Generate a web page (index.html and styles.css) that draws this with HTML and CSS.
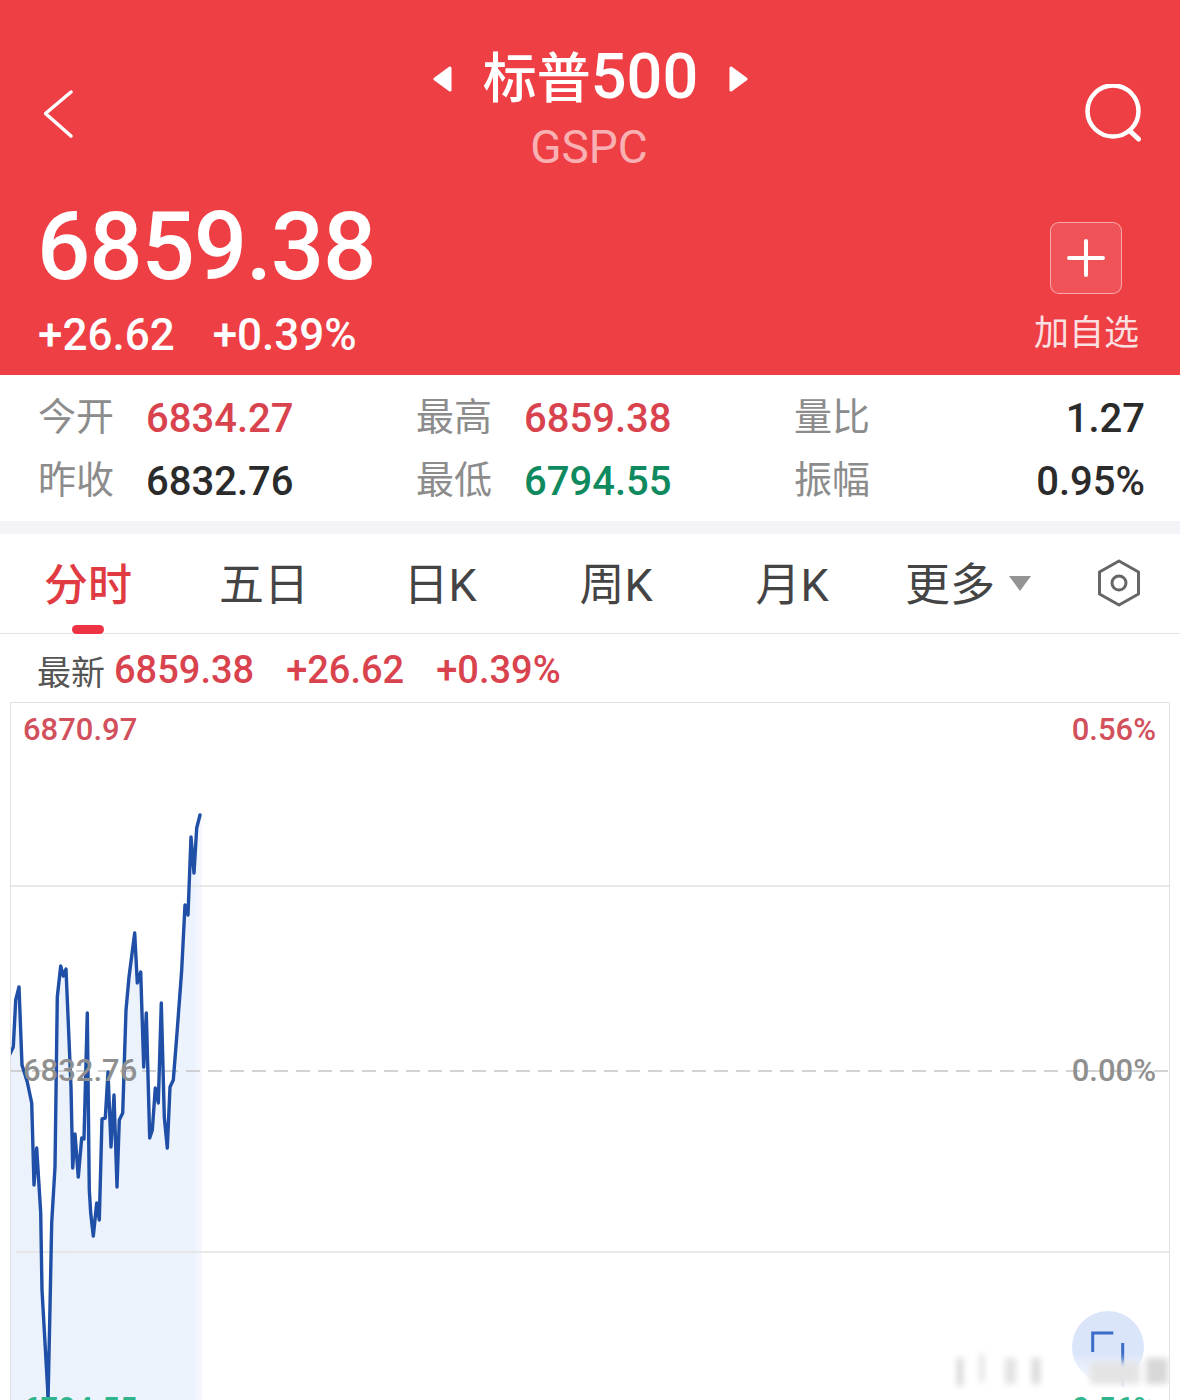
FILE: index.html
```html
<!DOCTYPE html>
<html lang="zh-CN">
<head>
  <meta charset="UTF-8" />
  <meta name="viewport" content="width=device-width, initial-scale=1.0" />
  <title>标普500 - GSPC</title>
  <link rel="stylesheet" href="styles.css">
</head>
<body>
  <div class="page">
    <header class="header">
      <div class="top-row">
        <svg class="icon-back" width="30" height="50" viewBox="0 0 30 50">
          <path d="M27 3 L1.500 24.500 L27 47" fill="none" stroke="#fff" stroke-width="3.500" stroke-linecap="round" stroke-linejoin="round" />
        </svg>
        <div class="title-block">
          <div class="title-line">
            <svg width="19" height="26" viewBox="0 0 19 26"><path d="M17 2 L2 13 L17 24 Z" fill="#fff" stroke="#fff" stroke-width="3" stroke-linejoin="round" /></svg>
            <h1 class="title">标普<span class="title-num">500</span></h1>
            <svg width="19" height="26" viewBox="0 0 19 26"><path d="M2 2 L17 13 L2 24 Z" fill="#fff" stroke="#fff" stroke-width="3" stroke-linejoin="round" /></svg>
          </div>
          <div class="code">GSPC</div>
        </div>
        <svg class="icon-search" width="58" height="58" viewBox="0 0 58 58">
          <circle cx="30" cy="27" r="25.500" fill="none" stroke="#fff" stroke-width="4.500" />
          <path d="M47 47 L55.500 55" fill="none" stroke="#fff" stroke-width="5" stroke-linecap="round" />
        </svg>
      </div>
      <div class="price-row">
        <div>
          <div class="price">6859.38</div>
          <div class="change"><span>+26.62</span><span>+0.39%</span></div>
        </div>
        <div class="add-box">
          <div class="add-btn">
            <svg width="38" height="38" viewBox="0 0 38 38"><path d="M19 2 V36 M2 19 H36" fill="none" stroke="#fff" stroke-width="4" stroke-linecap="round" /></svg>
          </div>
          <div class="add-text">加自选</div>
        </div>
      </div>
    </header>

    <section class="stats">
      <div class="stat"><span class="stat-label">今开</span><span class="stat-value up">6834.27</span></div>
      <div class="stat"><span class="stat-label">最高</span><span class="stat-value up">6859.38</span></div>
      <div class="stat stat-last"><span class="stat-label">量比</span><span class="stat-value">1.27</span></div>
      <div class="stat"><span class="stat-label">昨收</span><span class="stat-value">6832.76</span></div>
      <div class="stat"><span class="stat-label">最低</span><span class="stat-value down">6794.55</span></div>
      <div class="stat stat-last"><span class="stat-label">振幅</span><span class="stat-value">0.95%</span></div>
    </section>

    <nav class="tabs">
      <div class="tab active">分时</div>
      <div class="tab">五日</div>
      <div class="tab">日K</div>
      <div class="tab">周K</div>
      <div class="tab">月K</div>
      <div class="tab tab-more">更多<span class="caret"></span></div>
      <div class="tab-setting">
        <svg width="44" height="48" viewBox="0 0 44 48">
          <path d="M22 2 L41.500 13 V35 L22 46 L2.500 35 V13 Z" fill="none" stroke="#666" stroke-width="3" stroke-linejoin="round" />
          <circle cx="22" cy="24" r="7" fill="none" stroke="#666" stroke-width="3" />
        </svg>
      </div>
    </nav>

    <div class="quote">
      <span class="quote-label">最新</span>
      <span class="quote-value">6859.38</span>
      <span class="quote-value">+26.62</span>
      <span class="quote-value">+0.39%</span>
    </div>

    <div class="chart">
      <svg class="chart-svg" viewBox="10 702 1160 698" width="1160" height="698">
        <defs>
          <linearGradient id="fadeEdge" x1="0" x2="1" y1="0" y2="0">
            <stop offset="0" stop-color="#ecf2fc" />
            <stop offset="0.96" stop-color="#edf3fc" />
            <stop offset="1" stop-color="#f7f9fe" />
          </linearGradient>
          <linearGradient id="fadeWhite" x1="0" x2="0" y1="0" y2="1">
            <stop offset="0" stop-color="#fff" stop-opacity="0" />
            <stop offset="1" stop-color="#fff" stop-opacity="0.92" />
          </linearGradient>
          <filter id="smudge" x="-50%" y="-50%" width="200%" height="200%">
            <feGaussianBlur stdDeviation="3" />
          </filter>
        </defs>

        <path fill="url(#fadeEdge)" d="M10 1400 L10 1054 L13.300 1047 L15.700 1000 L19 987 L22 1065 L27.300 1082 L31.700 1103 L34 1185 L36.700 1148 L40.700 1213 L42 1290 L47.700 1390 L48 1402 L50 1307 L51.700 1223 L55 1167 L57.300 997 L60.700 966 L63.300 976 L66 969 L68.300 1023 L71 1087 L72.700 1168 L75 1134 L78.300 1177 L81.700 1138 L84 1139 L87.300 1013 L89.300 1190 L90.700 1213 L93.300 1236 L96.700 1203 L99.300 1220 L102 1119 L105.300 1118 L108 1072 L111 1147 L114 1095 L117 1187 L119.300 1120 L122.700 1113 L126 1010 L129 977 L134.700 933 L137.300 983 L140.700 972 L143.700 1067 L146.300 1013 L149.700 1138 L152.300 1130 L155.300 1088 L158.300 1103 L161.300 1003 L164.300 1117 L167.300 1148 L170 1087 L173.300 1080 L176.700 1037 L180 993 L181.700 970 L185 905 L188 915 L191 837 L194 873 L196.700 828 L200 815 L202 815 L202 1400 Z" />

        <line x1="10" x2="1169" y1="886" y2="886" stroke="#e2e2e2" stroke-width="1.500" />
        <line x1="16" x2="1169" y1="1252" y2="1252" stroke="#e2e2e2" stroke-width="1.500" />
        <line x1="10" x2="1169" y1="1071" y2="1071" stroke="#c4c4c4" stroke-width="1.500" stroke-dasharray="14 8" />

        <polyline fill="none" stroke="#1f4fa6" stroke-width="3.400" stroke-linejoin="round" stroke-linecap="round" points="10,1054 13.300,1047 15.700,1000 19,987 22,1065 27.300,1082 31.700,1103 34,1185 36.700,1148 40.700,1213 42,1290 47.700,1390 48,1402 50,1307 51.700,1223 55,1167 57.300,997 60.700,966 63.300,976 66,969 68.300,1023 71,1087 72.700,1168 75,1134 78.300,1177 81.700,1138 84,1139 87.300,1013 89.300,1190 90.700,1213 93.300,1236 96.700,1203 99.300,1220 102,1119 105.300,1118 108,1072 111,1147 114,1095 117,1187 119.300,1120 122.700,1113 126,1010 129,977 134.700,933 137.300,983 140.700,972 143.700,1067 146.300,1013 149.700,1138 152.300,1130 155.300,1088 158.300,1103 161.300,1003 164.300,1117 167.300,1148 170,1087 173.300,1080 176.700,1037 180,993 181.700,970 185,905 188,915 191,837 194,873 196.700,828 200,815" />

        <circle cx="1108" cy="1347" r="36" fill="#dbe5fa" />
        <path d="M1092.700 1352 V1333 H1113.300 M1122.700 1343 V1388" fill="none" stroke="#3a6cc8" stroke-width="3" />

        <rect x="950" y="1352" width="219" height="36" fill="url(#fadeWhite)" />
        <rect x="950" y="1387" width="219" height="13" fill="#fff" />
        <g filter="url(#smudge)">
          <rect x="957" y="1358" width="6" height="28" fill="#d6d6d6" />
          <rect x="980" y="1354" width="4" height="28" fill="#dcdcdc" />
          <rect x="1005" y="1358" width="11" height="26" fill="#e2e2e2" />
          <rect x="1032" y="1358" width="8" height="26" fill="#d8d8d8" />
          <rect x="1090" y="1362" width="50" height="22" fill="#e4e4e4" />
          <rect x="1146" y="1358" width="22" height="26" fill="#d8d8d8" />
        </g>
      </svg>

      <span class="axis-label axis-top-left">6870.97</span>
      <span class="axis-label axis-top-right">0.56%</span>
      <span class="axis-label axis-mid-left">6832.76</span>
      <span class="axis-label axis-mid-right">0.00%</span>
      <span class="axis-label axis-bot-left">6794.55</span>
      <span class="axis-label axis-bot-right">-0.56%</span>
    </div>
  </div>
</body>
</html>
```

FILE: styles.css
```css
html, body {
  margin: 0;
  padding: 0;
  overflow: hidden;
  background: #fff;
}
body {
  font-family: Roboto, "Noto Sans CJK SC", sans-serif;
}
.page {
  width: 1180px;
  height: 1400px;
  overflow: hidden;
  display: flex;
  flex-direction: column;
}

/* red header */
.header {
  height: 375px;
  box-sizing: border-box;
  background: #ee3f45;
  color: #fff;
  padding: 0 39px 0 40px;
  display: flex;
  flex-direction: column;
  flex-shrink: 0;
}
.top-row {
  height: 190px;
  padding-top: 38px;
  box-sizing: border-box;
  display: grid;
  grid-template-columns: 1fr auto 1fr;
  align-items: center;
}
.icon-back {
  margin-left: 4px;
}
.icon-search {
  justify-self: end;
  margin-top: -2px;
}
.title-block {
  display: flex;
  flex-direction: column;
  align-items: center;
  margin-top: -10px;
}
.title-line {
  display: flex;
  align-items: center;
  gap: 31px;
}
.title {
  margin: 0;
  font-size: 54px;
  font-weight: 500;
  line-height: 66px;
}
.title-num {
  font-size: 63px;
}
.code {
  font-size: 46px;
  line-height: 54px;
  margin-top: 7px;
  margin-right: 3px;
  color: #f9b0b3;
}
.price-row {
  display: flex;
  justify-content: space-between;
  align-items: flex-start;
}
.price {
  font-size: 94px;
  font-weight: 500;
  line-height: 108px;
  letter-spacing: -1.200px;
  margin-top: 3px;
  margin-left: -3px;
}
.change {
  display: flex;
  gap: 38px;
  font-size: 44px;
  font-weight: 500;
  line-height: 52px;
  margin-top: 8px;
  margin-left: -2px;
}
.add-box {
  display: flex;
  flex-direction: column;
  align-items: center;
  margin-top: 32px;
  margin-right: 2px;
}
.add-btn {
  width: 72px;
  height: 72px;
  box-sizing: border-box;
  border: 1.500px solid rgba(255, 255, 255, 0.5);
  border-radius: 9px;
  background: rgba(255, 255, 255, 0.1);
  display: flex;
  align-items: center;
  justify-content: center;
}
.add-text {
  font-size: 35px;
  line-height: 46px;
  margin-top: 17px;
  color: #fbe0e1;
}

/* stats table */
.stats {
  display: grid;
  grid-template-columns: 378px 378px 351px;
  grid-auto-rows: 63px;
  padding: 11px 0 9px 38px;
  border-bottom: 13px solid #f4f4f8;
  flex-shrink: 0;
}
.stat {
  display: flex;
  align-items: center;
  gap: 32px;
}
.stat-last {
  justify-content: space-between;
}
.stat-label {
  font-size: 38px;
  color: #8c8c8c;
  margin-top: -8px;
}
.stat-value {
  font-size: 40px;
  font-weight: 500;
  color: #2b2b2b;
  margin-top: 2px;
}
.up {
  color: #d9434e;
}
.down {
  color: #0f8a5f;
}

/* tabs */
.tabs {
  display: flex;
  height: 100px;
  box-sizing: border-box;
  border-bottom: 1.500px solid #e4e4e4;
  flex-shrink: 0;
}
.tab {
  width: 176px;
  display: flex;
  align-items: center;
  justify-content: center;
  font-size: 45px;
  color: #444;
  padding-bottom: 4px;
  box-sizing: border-box;
  position: relative;
}
.tab.active {
  color: #e03a42;
  font-size: 44px;
  font-weight: 500;
}
.tab.active::after {
  content: "";
  position: absolute;
  left: 72px;
  bottom: -1px;
  width: 32px;
  height: 9px;
  border-radius: 5px;
  background: #ee3344;
}
.tab-more {
  gap: 14px;
}
.caret {
  width: 0;
  height: 0;
  margin-top: 4px;
  border-left: 11px solid transparent;
  border-right: 11px solid transparent;
  border-top: 15px solid #949494;
}
.tab-setting {
  flex: 1;
  display: flex;
  align-items: center;
  justify-content: center;
  margin-left: 2px;
  padding-bottom: 2px;
}

/* latest quote line */
.quote {
  height: 68px;
  display: flex;
  align-items: center;
  padding-left: 37px;
  padding-top: 4px;
  box-sizing: border-box;
  gap: 32px;
  flex-shrink: 0;
}
.quote-label {
  font-size: 34px;
  color: #555;
  margin-right: -23px;
}
.quote-value {
  font-size: 38px;
  font-weight: 500;
  color: #d9434e;
}

/* chart */
.chart {
  position: relative;
  margin-left: 10px;
  width: 1160px;
  flex: 1;
  box-sizing: border-box;
  border: 1.500px solid #e2e2e2;
  border-bottom: 0;
  overflow: hidden;
}
.chart-svg {
  display: block;
  margin: -1.500px;
}
.axis-label {
  position: absolute;
  font-size: 31px;
  font-weight: 500;
  line-height: 38px;
  color: #d2505c;
}
.axis-top-left {
  left: 12px;
  top: 8px;
}
.axis-top-right {
  right: 13px;
  top: 8px;
}
.axis-mid-left {
  left: 12px;
  top: 349px;
  color: #8f8f8f;
}
.axis-mid-right {
  right: 13px;
  top: 349px;
  color: #8f8f8f;
}
.axis-bot-left {
  left: 12px;
  top: 687px;
  color: #2fb58b;
}
.axis-bot-right {
  right: 13px;
  top: 687px;
  color: #2fb58b;
}
```
